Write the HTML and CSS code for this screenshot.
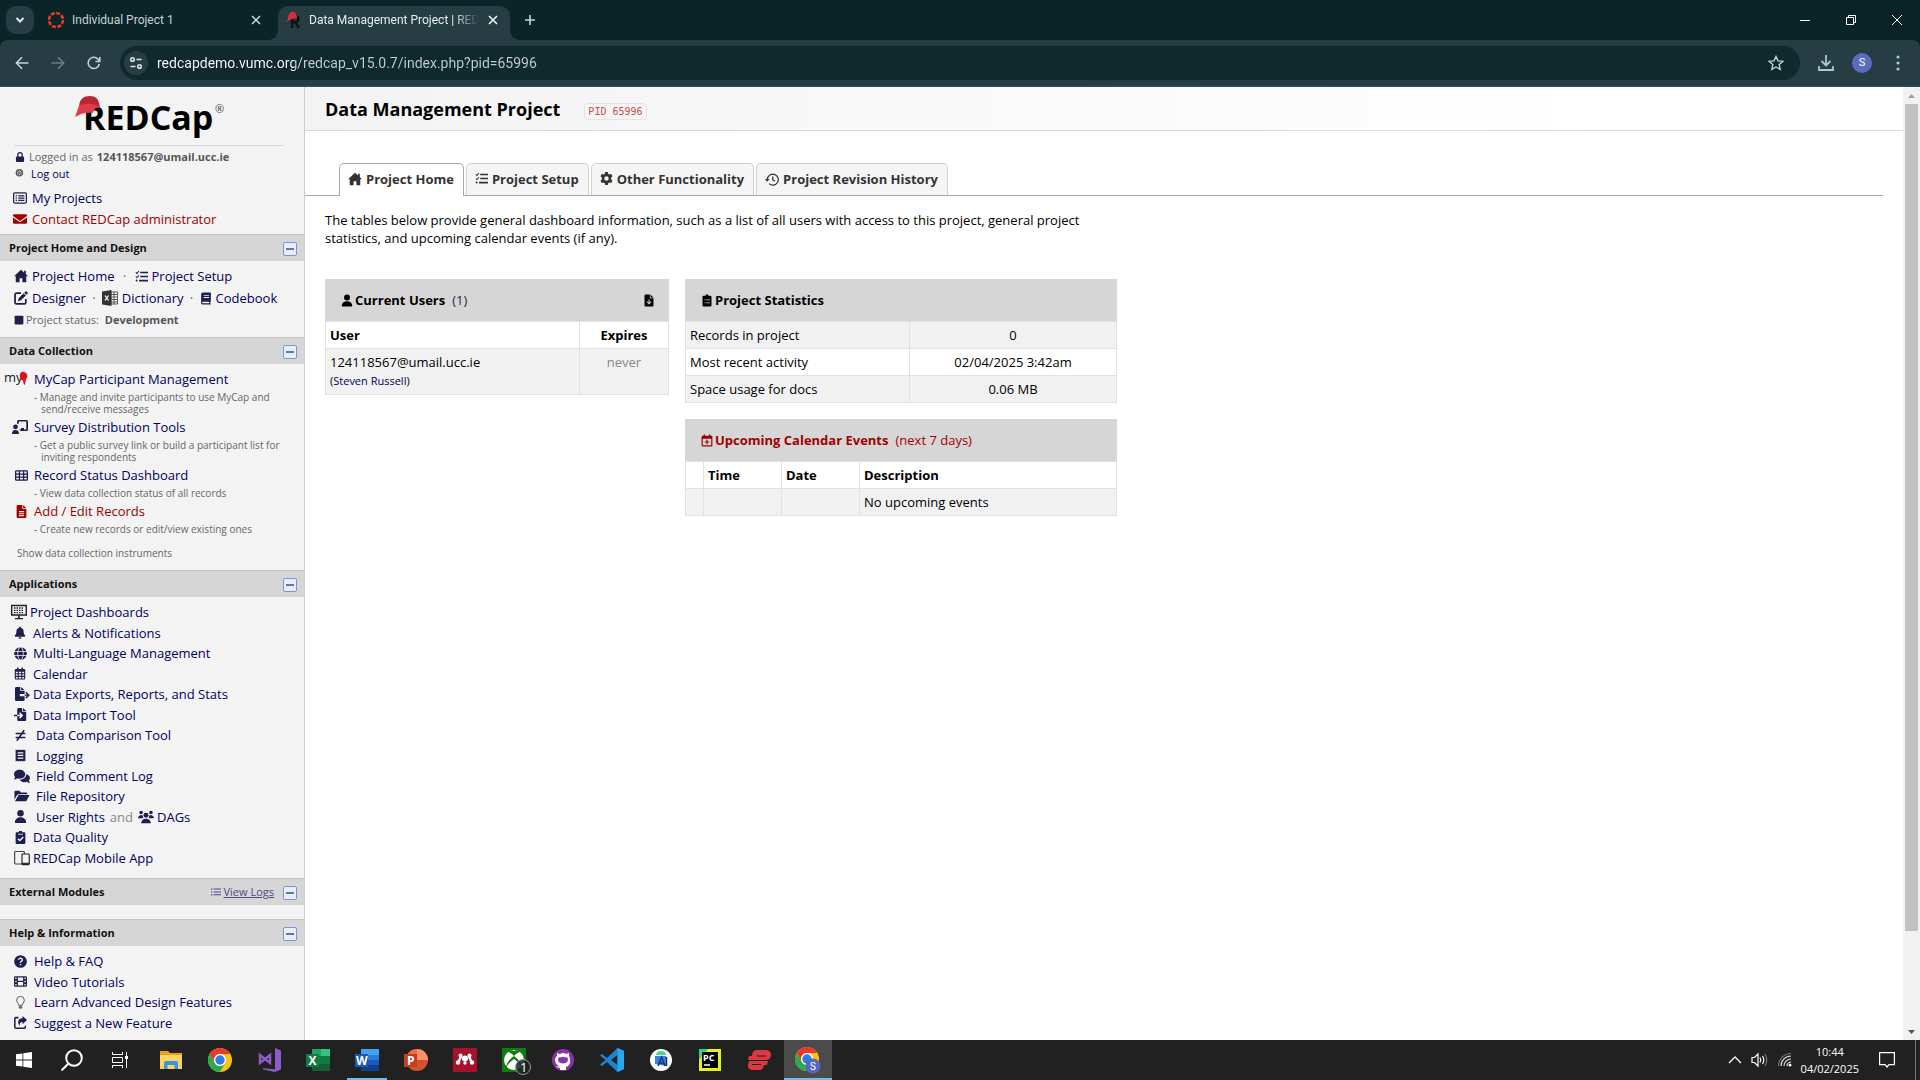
FILE: index.html
```html
<!DOCTYPE html>
<html lang="en">
<head>
<meta charset="utf-8">
<title>Data Management Project | REDCap</title>
<link rel="stylesheet" href="styles.css">
</head>
<body>
<svg class="sprite" aria-hidden="true">
  <symbol id="home" viewBox="0 0 16 16"><path d="M8 .8 0 8.2h2V15h4.4v-4.500h3.2V15H14V8.2h2L13.500 5.800V2h-2v2z"/></symbol>
  <symbol id="lock" viewBox="0 0 16 16"><path d="M8 0a4.500 4.500 0 0 0-4.500 4.500V7H3a1.500 1.500 0 0 0-1.500 1.500v6A1.500 1.500 0 0 0 3 16h10a1.500 1.500 0 0 0 1.500-1.500v-6A1.500 1.500 0 0 0 13 7h-.5V4.500A4.500 4.500 0 0 0 8 0zM5.500 7V4.500a2.500 2.500 0 0 1 5 0V7z"/></symbol>
  <symbol id="wheel" viewBox="0 0 16 16"><circle cx="7" cy="6" r="6" fill="#555"/><path d="M7 2v2.500M7 7.500V10M3 6h2.500M8.500 6H11M4 3l1.500 1.500M8.500 7.500 10 9M10 3 8.500 4.500M5.500 7.500 4 9" stroke="#ddd" stroke-width="1.500"/></symbol>
  <symbol id="listbox" viewBox="0 0 16 16"><rect x=".7" y="2.200" width="14.600" height="11.600" rx="1.500" fill="none" stroke="currentColor" stroke-width="1.400"/><path d="M3 4.800h1.500v1.400H3zm3 0h7v1.400H6zM3 7.400h1.500v1.400H3zm3 0h7v1.400H6zM3 10h1.500v1.400H3zm3 0h7v1.400H6z"/></symbol>
  <symbol id="mail" viewBox="0 0 16 16"><path d="M1.500 2.500h13A1.500 1.500 0 0 1 16 4v.7L8 10.200 0 4.700V4a1.500 1.500 0 0 1 1.500-1.500zM0 6.200l8 5.500 8-5.500V12a1.500 1.500 0 0 1-1.500 1.500h-13A1.500 1.500 0 0 1 0 12z"/></symbol>
  <symbol id="tasks" viewBox="0 0 16 16"><path d="M1 3l1.300 1.300L4.800 1.500M1 8l1.300 1.300L4.800 6.500" fill="none" stroke="currentColor" stroke-width="1.300"/><path d="M6.500 2H16v2H6.500zm0 5H16v2H6.500zM5 12h11v2H5z"/><circle cx="2" cy="13" r="1.200"/></symbol>
  <symbol id="edit" viewBox="0 0 16 16"><path d="M8 2.500H3A1.800 1.800 0 0 0 1.200 4.300V13A1.800 1.800 0 0 0 3 14.800h8.700a1.800 1.800 0 0 0 1.800-1.800V9" fill="none" stroke="currentColor" stroke-width="2"/><path d="M12.800.8a1.300 1.300 0 0 1 1.900 0l.6.600a1.300 1.300 0 0 1 0 1.900l-1.100 1.100-2.500-2.500zM11 2.600l2.500 2.500-5.600 5.600-3.400.9.900-3.400z"/></symbol>
  <symbol id="excelfile" viewBox="0 0 16 16"><path d="M9 2h6.500v12H9z" fill="#fff" stroke="#333" stroke-width=".8"/><path d="M9.500 4.500H15M9.500 7H15M9.500 9.500H15M9.500 12H15M12 2v12" stroke="#444" stroke-width=".9"/><path d="M0 1.500 9.500 0v16L0 14.500z" fill="#333"/><path d="m3 5.500 3.500 5M6.500 5.500 3 10.500" stroke="#fff" stroke-width="1.300"/></symbol>
  <symbol id="book" viewBox="0 0 16 16"><path fill-rule="evenodd" d="M4 0h10.500v11.800l-.8.800v1.600l.8.800v1H4a2.500 2.500 0 0 1-2.500-2.500v-11A2.500 2.500 0 0 1 4 0zm1 3.500v1.200h7V3.500zm0 2.500v1.200h7V6zm-1 6.300a1 1 0 0 0 0 2h8.200v-2z"/></symbol>
  <symbol id="square" viewBox="0 0 16 16"><rect x="1" y="1" width="14" height="14" rx="1.500"/></symbol>
  <symbol id="teacher" viewBox="0 0 16 16"><circle cx="3.500" cy="7.800" r="2.400"/><path d="M0 15a3.500 4 0 0 1 7 0zM5 2.500A1.500 1.500 0 0 1 6.500 1H14.500A1.500 1.500 0 0 1 16 2.500v8a1.500 1.500 0 0 1-1.500 1.500H8.200l-.8-1.500H9V9h3v1.500h2.300v-8H6.700v2.600L5 4.500z"/></symbol>
  <symbol id="table" viewBox="0 0 16 16"><path fill-rule="evenodd" d="M1.500 1.500h13A1.500 1.500 0 0 1 16 3v10a1.500 1.500 0 0 1-1.500 1.500h-13A1.500 1.500 0 0 1 0 13V3a1.500 1.500 0 0 1 1.500-1.500zM1.600 3v2.400h3V3zm4.600 0v2.400h3.600V3zm5.200 0v2.400h3V3zM1.600 7v2.200h3V7zm4.600 0v2.200h3.600V7zm5.200 0v2.200h3V7zM1.600 10.800V13h3v-2.200zm4.600 0V13h3.600v-2.200zm5.200 0V13h3v-2.200z"/></symbol>
  <symbol id="file" viewBox="0 0 16 16"><path fill-rule="evenodd" d="M3.500 0H9v5h5v9.500a1.500 1.500 0 0 1-1.500 1.500h-9A1.500 1.500 0 0 1 2 14.500v-13A1.500 1.500 0 0 1 3.500 0zM10 0l4 4h-4zM4.800 7.500V9h6.400V7.500zm0 2.500v1.300h6.400V10zm0 2.300v1.400h6.400v-1.400z"/></symbol>
  <symbol id="board" viewBox="0 0 16 16"><path d="M.7 1.500h14.600v9.500H.7z" fill="none" stroke="#222" stroke-width="1.400"/><path d="M3 4h10M3 6.300h10M3 8.600h10" stroke="#222" stroke-width="1.300" stroke-dasharray="1.500 1"/><path d="M7.200 11h1.600v3H12v1.300H4V14h3.200z" fill="#222"/></symbol>
  <symbol id="bell" viewBox="0 0 16 16"><path d="M8 0a1 1 0 0 0-1 1v.7A5 5 0 0 0 3.200 6.500c0 3-1 4-2 5.200-.6.800-.1 1.800.8 1.800h12c.9 0 1.400-1 .8-1.800-1-1.200-2-2.200-2-5.200A5 5 0 0 0 9 1.700V1a1 1 0 0 0-1-1zM6 14.300a2 2 0 0 0 4 0z"/></symbol>
  <symbol id="globe" viewBox="0 0 16 16"><circle cx="8" cy="8" r="7.800"/><g fill="none" stroke="#f3f3f3" stroke-width="1"><ellipse cx="8" cy="8" rx="3.400" ry="7.800"/><path d="M0 5.500h16M0 10.500h16"/></g></symbol>
  <symbol id="cal" viewBox="0 0 16 16"><path fill-rule="evenodd" d="M4 0h2v2h4V0h2v2h1.500A1.500 1.500 0 0 1 15 3.500v11a1.500 1.500 0 0 1-1.500 1.500h-11A1.500 1.500 0 0 1 1 14.500v-11A1.500 1.500 0 0 1 2.500 2H4zM2.500 5.500v2h2.500v-2zm3.900 0v2h3.200v-2zm4.600 0v2h2.500v-2zM2.500 9v2H5V9zm3.900 0v2h3.200V9zM11 9v2h2.500V9zm-8.500 3.500v2H5v-2zm3.900 0v2h3.200v-2zm4.600 0v2h2.500v-2z"/></symbol>
  <symbol id="export" viewBox="0 0 18 16"><path d="M2.500 0H7v4.500h5V8H6.500v2.500H12v4a1.500 1.500 0 0 1-1.500 1.500h-8A1.500 1.500 0 0 1 1 14.500v-13A1.500 1.500 0 0 1 2.500 0zM8 0l4 3.800H8zM12 8.500h2.800l-2-2L14 5.400l4 3.900-4 3.900-1.200-1.200 1.900-1.900H12z"/></symbol>
  <symbol id="import" viewBox="0 0 16 16"><path fill-rule="evenodd" d="M5.500 0H10v4.500h5v10a1.500 1.500 0 0 1-1.500 1.500h-8A1.500 1.500 0 0 1 4 14.500v-4.200h3.800L6.300 12l1.200 1.200 3.900-4-3.900-3.900L6.300 6.500l1.500 1.700H4V1.500A1.500 1.500 0 0 1 5.500 0zM11 0l4 3.800h-4zM0 8.200h4v2H0z"/></symbol>
  <symbol id="noteq" viewBox="0 0 16 16"><path d="M2 5.500h12M2 10.500h12M12.500 1.500l-9 13" fill="none" stroke="currentColor" stroke-width="1.900"/></symbol>
  <symbol id="receipt" viewBox="0 0 16 16"><path fill-rule="evenodd" d="M2 .5 3.500 1.500 5 .5l1.500 1L8 .5l1.500 1 1.500-1 1.500 1 1.500-1v15l-1.500-1-1.500 1-1.500-1-1.500 1-1.500-1-1.500 1-1.500-1-1.500 1zM4.500 4v1.400h7V4zm0 3.200v1.400h7V7.200zm0 3.300v1.400h7v-1.400z"/></symbol>
  <symbol id="comments" viewBox="0 0 18 16"><path d="M6.300 1C2.800 1 0 3.200 0 6c0 1.200.5 2.200 1.300 3.100C1 10.200.3 11 .2 11.200c-.2.200 0 .6.300.6 1.600 0 2.800-.8 3.400-1.200.7.200 1.500.4 2.400.4 3.500 0 6.300-2.200 6.300-5S9.800 1 6.300 1z"/><path d="M13.700 6c0 3.500-3.300 6.100-7.200 6.100.9 1.700 3 2.900 5.500 2.900.9 0 1.700-.1 2.400-.4.600.5 1.800 1.200 3.200 1.200.3 0 .4-.3.200-.6-.1-.1-.8-.9-1.100-2 .8-.9 1.300-2 1.300-3.100 0-1.900-1.700-3.500-4.300-4.100z"/></symbol>
  <symbol id="folder" viewBox="0 0 18 16"><path d="M2 2h4l2 2h5.500A1.500 1.500 0 0 1 15 5.500V6H5.200a2 2 0 0 0-1.700 1L.5 12V3.500A1.500 1.500 0 0 1 2 2zM5.200 7H17.500l-3.200 6.200a1.500 1.500 0 0 1-1.300.8H1z"/></symbol>
  <symbol id="user" viewBox="0 0 16 16"><circle cx="8" cy="4" r="4"/><path d="M1 15a7 6 0 0 1 14 0q0 1-1 1H2q-1 0-1-1z"/></symbol>
  <symbol id="users" viewBox="0 0 18 16"><circle cx="3.500" cy="3" r="2"/><circle cx="14.500" cy="3" r="2"/><circle cx="9" cy="6" r="2.800"/><path d="M0 9a3.500 3.500 0 0 1 5.500-2.500A4 4 0 0 0 6.300 9.500H.5zM18 9a3.500 3.500 0 0 0-5.500-2.500 4 4 0 0 1-.8 3h5.800zM3.500 15a5.500 5 0 0 1 11 0z"/></symbol>
  <symbol id="clipcheck" viewBox="0 0 16 16"><path d="M6 1.500a2 2 0 0 1 4 0h2.500A1.500 1.500 0 0 1 14 3v11.500a1.500 1.500 0 0 1-1.500 1.500h-9A1.500 1.500 0 0 1 2 14.500V3a1.500 1.500 0 0 1 1.500-1.500z"/><path d="m4.800 9.500 2.300 2.300 4.300-4.500" fill="none" stroke="#f3f3f3" stroke-width="1.700"/><path d="M5 4h6" stroke="#f3f3f3"/></symbol>
  <symbol id="devices" viewBox="0 0 18 16"><rect x=".7" y=".7" width="11" height="14" rx="1" fill="#f3f3f3" stroke="#444" stroke-width="1.300"/><rect x="9" y="3.500" width="8.200" height="12" rx="1" fill="#f3f3f3" stroke="#222" stroke-width="1.300"/><path d="M9 14h8" stroke="#222" stroke-width="1.300"/></symbol>
  <symbol id="help" viewBox="0 0 16 16"><circle cx="8" cy="8" r="7.800"/><path d="M5.800 6a2.200 2 0 1 1 3.500 1.600C8.400 8.200 8 8.500 8 9.500M8 11v1.700" fill="none" stroke="#f3f3f3" stroke-width="1.700"/></symbol>
  <symbol id="film" viewBox="0 0 16 16"><path fill-rule="evenodd" d="M1.500 1.500h13A1.500 1.500 0 0 1 16 3v10a1.500 1.500 0 0 1-1.500 1.500h-13A1.500 1.500 0 0 1 0 13V3a1.500 1.500 0 0 1 1.500-1.500zM1.500 3.200V5h1.700V3.200zm0 4v1.800h1.700V7.200zm0 4V13h1.700v-1.800zm11.300-8V5h1.700V3.200zm0 4v1.800h1.700V7.200zm0 4V13h1.700v-1.800zM4.800 3v4.200h6.400V3zm0 5.700V13h6.400V8.700z"/></symbol>
  <symbol id="bulb" viewBox="0 0 16 16"><path d="M6 11.500C5.800 9.200 3.300 8.300 3.300 5.200a4.700 4.700 0 0 1 9.400 0c0 3.100-2.500 4-2.700 6.300z" fill="none" stroke="#555" stroke-width="1.200"/><path d="M5.800 12.500h4.400v1.600L9 15.700H7l-1.200-1.600z" fill="#666"/></symbol>
  <symbol id="share" viewBox="0 0 16 16"><path d="M5.500 2H2.500A1.500 1.500 0 0 0 1 3.500v10A1.500 1.500 0 0 0 2.500 15h10a1.500 1.500 0 0 0 1.500-1.500V12" fill="none" stroke="currentColor" stroke-width="1.900"/><path d="M10.500 0 16 5l-5.500 5V7.300C7.500 7.300 6.500 9 7.500 12 3.500 9 4.500 3 10.500 2.900z"/></symbol>
  <symbol id="list" viewBox="0 0 16 16"><path d="M0 2.500h2.200v1.800H0zm4 0h12v1.600H4zM0 7h2.200v1.800H0zm4 0h12v1.600H4zm-4 4.600h2.200v1.800H0zm4 0h12v1.600H4z"/></symbol>
  <symbol id="gear" viewBox="0 0 16 16"><path fill-rule="evenodd" d="M6.400 0h3.200l.5 2.300 1.500.9 2.200-.8 1.600 2.800-1.700 1.600v2.400l1.700 1.600-1.600 2.800-2.200-.8-1.500.9-.5 2.300H6.400l-.5-2.300-1.500-.9-2.200.8L.6 10.800l1.700-1.600V6.800L.6 5.200l1.600-2.800 2.200.8 1.500-.9zM8 5.300a2.700 2.700 0 1 0 0 5.400 2.700 2.700 0 0 0 0-5.400z"/></symbol>
  <symbol id="history" viewBox="0 0 16 16"><path d="M2.600 8.500A6.300 6.300 0 1 1 4.600 13.300M8.900 5v4l2.400 1.500" fill="none" stroke="currentColor" stroke-width="1.400"/><path d="M0 8h5.200L2.600 11.200z"/></symbol>
  <symbol id="filedown" viewBox="0 0 16 16"><path fill-rule="evenodd" d="M3.500 0H9v5h5v9.500a1.500 1.500 0 0 1-1.500 1.500h-9A1.500 1.500 0 0 1 2 14.500v-13A1.500 1.500 0 0 1 3.500 0zM10 0l4 4h-4zM7.300 6.500v4L5.800 9l-1 1L8 13.300l3.200-3.300-1-1-1.500 1.500v-4z"/></symbol>
  <symbol id="cliplist" viewBox="0 0 16 16"><path fill-rule="evenodd" d="M6 1.500a2 2 0 0 1 4 0h2.500A1.500 1.500 0 0 1 14 3v11.500a1.500 1.500 0 0 1-1.500 1.500h-9A1.500 1.500 0 0 1 2 14.500V3a1.500 1.500 0 0 1 1.500-1.500zM4.500 6.500v1.300H6V6.500zm2.500 0v1.300h5V6.500zm-2.500 4v1.300H6v-1.300zm2.500 0v1.300h5v-1.300z"/></symbol>
  <symbol id="calplus" viewBox="0 0 16 16"><path fill-rule="evenodd" d="M3.500 0h2v1.800h5V0h2v1.800h1.300A1.500 1.500 0 0 1 15.200 3.300v11.200a1.500 1.500 0 0 1-1.500 1.500H2.300a1.500 1.500 0 0 1-1.500-1.500V3.300a1.500 1.500 0 0 1 1.500-1.500h1.200zM2.400 5.500v8.900h11.200V5.500zM7.200 7h1.600v2.200H11v1.600H8.800V13H7.200v-2.200H5V9.200h2.200z"/></symbol>
  <symbol id="chrome" viewBox="0 0 24 24"><circle cx="12" cy="12" r="12" fill="#fbc116"/><path d="M1.600 6A12 12 0 0 1 22.400 6H12a6 6 0 0 0-5.200 9z" fill="#e33b2e"/><path d="M1.600 6A12 12 0 0 0 12 24l5.200-9a6 6 0 0 1-10.400 0z" fill="#2da94f"/><circle cx="12" cy="12" r="6" fill="#fff"/><circle cx="12" cy="12" r="4.700" fill="#2f7de9"/></symbol>
</svg>

<header class="tabstrip">
  <button class="tab-search" aria-label="Search tabs"><svg width="10" height="10" viewBox="0 0 10 10" fill="none" stroke="#dfe9ea" stroke-width="2"><path d="m1.500 3 3.500 3.500L8.500 3"/></svg></button>
  <div class="btab">
    <svg width="18" height="18" viewBox="0 0 18 18"><circle cx="9" cy="9" r="7" fill="none" stroke="#e63b2a" stroke-width="2.600" stroke-dasharray="4 1.500"/></svg>
    <span class="btab-title">Individual Project 1</span>
    <button class="x" aria-label="Close tab"><svg width="10" height="10" viewBox="0 0 10 10" stroke="#cfdcdd" stroke-width="1.500"><path d="m1 1 8 8M9 1 1 9"/></svg></button>
  </div>
  <div class="btab current">
    <svg width="16" height="18" viewBox="0 0 16 18"><path d="M6 17V5h3.500a3 3 0 0 1 0 6H6m3 0 4 6" fill="none" stroke="#111" stroke-width="2.400"/><path d="M2 8C2 2 5 0 8 1c2 .6 3 3 3 6L6 8 0 11z" fill="#d0303f"/></svg>
    <span class="btab-title fade">Data Management Project | RED</span>
    <button class="x" aria-label="Close tab"><svg width="10" height="10" viewBox="0 0 10 10" stroke="#e8f0f0" stroke-width="1.700"><path d="m1 1 8 8M9 1 1 9"/></svg></button>
  </div>
  <button class="newtab" aria-label="New tab"><svg width="12" height="12" viewBox="0 0 12 12" stroke="#c8d6d8" stroke-width="1.600"><path d="M6 1v10M1 6h10"/></svg></button>
  <div class="winctl">
    <button aria-label="Minimise"><svg width="12" height="12" viewBox="0 0 12 12" stroke="#fff"><path d="M1 6.500h10"/></svg></button>
    <button aria-label="Restore"><svg width="12" height="12" viewBox="0 0 12 12" fill="none" stroke="#fff"><path d="M1.500 3.500h7v7h-7zM3.500 3V1.500h7v7H9"/></svg></button>
    <button aria-label="Close"><svg width="12" height="12" viewBox="0 0 12 12" stroke="#fff"><path d="m1 1 10 10M11 1 1 11"/></svg></button>
  </div>
</header>

<div class="toolbar-back"><div class="toolbar">
  <button aria-label="Back"><svg width="14" height="14" viewBox="0 0 14 14" fill="none" stroke="#c3d3d5" stroke-width="1.600"><path d="M13.500 7H1.500M7 1.300 1.400 7 7 12.700"/></svg></button>
  <button aria-label="Forward"><svg width="14" height="14" viewBox="0 0 14 14" fill="none" stroke="#6b7f83" stroke-width="1.600"><path d="M.5 7h12M7 1.300 12.600 7 7 12.700"/></svg></button>
  <button aria-label="Reload"><svg width="14" height="14" viewBox="0 0 14 14" fill="none" stroke="#c3d3d5" stroke-width="1.600"><path d="M12.300 8A5.600 5.600 0 1 1 11 3.200L12.800 5M12.800 1v4.500H8.500"/></svg></button>
  <div class="omnibox">
    <button class="site" aria-label="Site information"><svg width="14" height="14" viewBox="0 0 14 14" fill="none" stroke="#dfe9ea" stroke-width="1.500"><circle cx="3.500" cy="3.500" r="1.800"/><path d="M7.500 3.500h5M1.500 10.500h5"/><circle cx="10.500" cy="10.500" r="1.800"/></svg></button>
    <input class="url" type="text" aria-label="Address" value="redcapdemo.vumc.org/redcap_v15.0.7/index.php?pid=65996">
    <button class="star" aria-label="Bookmark"><svg width="16" height="16" viewBox="0 0 16 16" fill="none" stroke="#c6d2d3" stroke-width="1.400"><path d="m8 1.500 2 4.400 4.800.5-3.600 3.200 1 4.800L8 12l-4.200 2.400 1-4.800L1.200 6.400 6 5.900z"/></svg></button>
  </div>
  <button class="dl" aria-label="Downloads"><svg width="16" height="16" viewBox="0 0 16 16" fill="none" stroke="#a9c9ce" stroke-width="1.800"><path d="M8 0v10M3.500 6 8 10.500 12.500 6M1 11v4h14v-4"/></svg></button>
  <button class="avatar" aria-label="Profile">S</button>
  <button class="more" aria-label="Menu"><svg width="4" height="16" viewBox="0 0 4 16" fill="#a9c9ce"><circle cx="2" cy="2" r="1.600"/><circle cx="2" cy="8" r="1.600"/><circle cx="2" cy="14" r="1.600"/></svg></button>
</div></div>

<div class="page">
  <aside class="side">
    <a class="logo" href="#" aria-label="REDCap home"><svg width="154" height="50" viewBox="0 0 154 50"><text x="11" y="35" class="logo-text">REDCap</text><text x="143" y="18" class="logo-reg">®</text><path d="M7 12C7 4 12 1 18 1c7 0 9 4 10 12z" fill="#b92636"/><path d="M7 11 3 22c6-4 12-5 18-4 1-4 3-6 7-6-7-4-15-4-21-1z" fill="#df3c4c"/></svg></a>
    <div class="who">
      <p><svg class="i i10"><use href="#lock"/></svg>Logged in as <b>124118567@umail.ucc.ie</b></p>
      <p class="out"><svg class="i i10"><use href="#wheel"/></svg><a href="#">Log out</a></p>
    </div>
    <ul class="top-links">
      <li><svg class="i"><use href="#listbox"/></svg><a href="#">My Projects</a></li>
      <li class="red"><svg class="i"><use href="#mail"/></svg><a href="#">Contact REDCap administrator</a></li>
    </ul>

    <div class="bar"><h2>Project Home and Design</h2><button class="fold" aria-label="Collapse"></button></div>
    <div class="design">
      <p><svg class="i"><use href="#home"/></svg><a href="#">Project Home</a><span class="dot wide-dot">·</span><svg class="i i13"><use href="#tasks"/></svg><a href="#">Project Setup</a></p>
      <p><svg class="i"><use href="#edit"/></svg><a href="#">Designer</a><span class="dot">·</span><svg class="i i16"><use href="#excelfile"/></svg><a href="#">Dictionary</a><span class="dot">·</span><svg class="i i12"><use href="#book"/></svg><a href="#">Codebook</a></p>
      <p class="status"><svg class="i i10"><use href="#square"/></svg>Project status: <b>Development</b></p>
    </div>

    <div class="bar"><h2>Data Collection</h2><button class="fold" aria-label="Collapse"></button></div>
    <div class="collect">
      <div class="item"><p><span class="slot"><svg width="24" height="16" viewBox="0 0 24 16"><text x="0" y="11" class="my">my</text><path d="M16 6c-1-4 2-6 4-5 4 1 4 5 2 7l-1 6c-2-1-2-4-2-5-1 1-2 0-3-3z" fill="#e01020"/></svg></span><a href="#">MyCap Participant Management</a></p><div class="sub">- Manage and invite participants to use MyCap and send/receive messages</div></div>
      <div class="item"><p><span class="slot"><svg class="i i16"><use href="#teacher"/></svg></span><a href="#">Survey Distribution Tools</a></p><div class="sub">- Get a public survey link or build a participant list for inviting respondents</div></div>
      <div class="item"><p><span class="slot"><svg class="i i13"><use href="#table"/></svg></span><a href="#">Record Status Dashboard</a></p><div class="sub">- View data collection status of all records</div></div>
      <div class="item red"><p><span class="slot"><svg class="i i13"><use href="#file"/></svg></span><a href="#">Add / Edit Records</a></p><div class="sub">- Create new records or edit/view existing ones</div></div>
      <div class="show">Show data collection instruments</div>
    </div>

    <div class="bar"><h2>Applications</h2><button class="fold" aria-label="Collapse"></button></div>
    <ul class="apps">
      <li class="tight"><svg class="i i16"><use href="#board"/></svg><a href="#">Project Dashboards</a></li>
      <li><svg class="i i12"><use href="#bell"/></svg><a href="#">Alerts &amp; Notifications</a></li>
      <li><svg class="i i13"><use href="#globe"/></svg><a href="#">Multi-Language Management</a></li>
      <li><svg class="i i12"><use href="#cal"/></svg><a href="#">Calendar</a></li>
      <li><svg class="i i16 i13h"><use href="#export"/></svg><a href="#">Data Exports, Reports, and Stats</a></li>
      <li><svg class="i i13"><use href="#import"/></svg><a href="#">Data Import Tool</a></li>
      <li class="loose"><svg class="i i13"><use href="#noteq"/></svg><a href="#">Data Comparison Tool</a></li>
      <li class="loose"><svg class="i i13"><use href="#receipt"/></svg><a href="#">Logging</a></li>
      <li class="loose"><svg class="i i16"><use href="#comments"/></svg><a href="#">Field Comment Log</a></li>
      <li class="loose"><svg class="i i16"><use href="#folder"/></svg><a href="#">File Repository</a></li>
      <li class="loose"><svg class="i i13"><use href="#user"/></svg><a href="#">User Rights</a><span class="and">and</span><svg class="i i16 dags"><use href="#users"/></svg><a href="#">DAGs</a></li>
      <li><svg class="i i13"><use href="#clipcheck"/></svg><a href="#">Data Quality</a></li>
      <li><svg class="i i16"><use href="#devices"/></svg><a href="#">REDCap Mobile App</a></li>
    </ul>

    <div class="bar"><h2>External Modules</h2><a class="logs" href="#"><svg class="i i10"><use href="#list"/></svg><span>View Logs</span></a><button class="fold" aria-label="Collapse"></button></div>
    <div class="empty"></div>
    <div class="bar"><h2>Help &amp; Information</h2><button class="fold" aria-label="Collapse"></button></div>
    <ul class="apps help">
      <li><svg class="i i13"><use href="#help"/></svg><a href="#">Help &amp; FAQ</a></li>
      <li><svg class="i i13"><use href="#film"/></svg><a href="#">Video Tutorials</a></li>
      <li><svg class="i i13"><use href="#bulb"/></svg><a href="#">Learn Advanced Design Features</a></li>
      <li><svg class="i i13"><use href="#share"/></svg><a href="#">Suggest a New Feature</a></li>
    </ul>
  </aside>

  <main class="main">
    <div class="title"><h1>Data Management Project</h1><span class="pid">PID 65996</span></div>
    <nav class="ptabs">
      <a class="on" href="#"><svg class="i"><use href="#home"/></svg>Project Home</a>
      <a href="#"><svg class="i i13"><use href="#tasks"/></svg>Project Setup</a>
      <a href="#"><svg class="i i13"><use href="#gear"/></svg>Other Functionality</a>
      <a href="#"><svg class="i"><use href="#history"/></svg>Project Revision History</a>
    </nav>
    <div class="content">
      <p class="intro">The tables below provide general dashboard information, such as a list of all users with access to this project, general project statistics, and upcoming calendar events (if any).</p>
      <div class="cols">
        <section class="users">
          <div class="cap"><svg class="i i12"><use href="#user"/></svg><h3>Current Users</h3><span class="count">(1)</span><button class="dlusers" aria-label="Download list"><svg class="i i12"><use href="#filedown"/></svg></button></div>
          <table>
            <colgroup><col><col class="c-exp"></colgroup>
            <tr><th>User</th><th class="mid">Expires</th></tr>
            <tr class="alt"><td>124118567@umail.ucc.ie<br><small>(<a href="#">Steven Russell</a>)</small></td><td class="mid grey">never</td></tr>
          </table>
        </section>
        <div class="right">
          <section>
            <div class="cap"><svg class="i i12"><use href="#cliplist"/></svg><h3>Project Statistics</h3></div>
            <table>
              <colgroup><col><col class="c-stat"></colgroup>
              <tr class="alt"><td>Records in project</td><td class="mid">0</td></tr>
              <tr><td>Most recent activity</td><td class="mid">02/04/2025 3:42am</td></tr>
              <tr class="alt"><td>Space usage for docs</td><td class="mid">0.06 MB</td></tr>
            </table>
          </section>
          <section>
            <div class="cap redcap"><svg class="i i12"><use href="#calplus"/></svg><h3>Upcoming Calendar Events</h3><span class="days">(next 7 days)</span></div>
            <table>
              <colgroup><col class="c-a"><col class="c-b"><col class="c-b"><col></colgroup>
              <tr><th></th><th>Time</th><th>Date</th><th>Description</th></tr>
              <tr class="alt"><td></td><td></td><td></td><td>No upcoming events</td></tr>
            </table>
          </section>
        </div>
      </div>
    </div>
  </main>

  <div class="scroll">
    <svg width="17" height="17" viewBox="0 0 17 17"><path d="m5 11 3.500-4L12 11z" fill="#a0a0a0"/></svg>
    <div class="track"><div class="thumb"></div></div>
    <svg width="17" height="17" viewBox="0 0 17 17"><path d="m5 7 3.500 4L12 7z" fill="#505050"/></svg>
  </div>
</div>

<footer class="taskbar">
  <div class="sys">
    <button aria-label="Start"><svg width="16" height="16" viewBox="0 0 16 16" fill="#fff"><path d="M0 2.300 6.500 1.400v6.200H0zM7.300 1.300 16 0v7.600H7.300zM0 8.400h6.500v6.200L0 13.700zM7.300 8.400H16V16l-8.700-1.300z"/></svg></button>
    <button aria-label="Search"><svg width="22" height="22" viewBox="0 0 22 22" fill="none" stroke="#fff" stroke-width="2"><circle cx="13" cy="9" r="7.800"/><path d="m7.500 14.500-7 7"/></svg></button>
    <button aria-label="Task view"><svg width="16" height="16" viewBox="0 0 16 16" fill="none" stroke="#fff"><path d="M.5 0v2.500h10V0M.5 5.500h10v5H.5zM.5 16v-2.500h10V16M14.500 0v16"/><path d="M13 4h3v3h-3z" fill="#fff" stroke="none"/></svg></button>
  </div>
  <div class="run">
    <button aria-label="File Explorer"><svg width="22" height="18" viewBox="0 0 22 18"><path d="M0 0h8l2 2h12v16H0z" fill="#e8a50e"/><path d="M0 4h22v14H0z" fill="#fbd367"/><path d="M4 18v-6q0-2 2-2h10q2 0 2 2v6h-3.500v-4h-7v4z" fill="#3b95dc"/></svg></button>
    <button aria-label="Chrome"><svg width="24" height="24"><use href="#chrome"/></svg></button>
    <button aria-label="Visual Studio"><svg width="24" height="24" viewBox="0 0 24 24" fill="none"><path d="M18 0l6 2.500v19L18 24 6 21.500v-1.300l12 1z" fill="#8b5cc8"/><path d="M3 7v8l5-4 5 4V7L8 11z" stroke="#8b5cc8" stroke-width="2.500"/></svg></button>
    <button aria-label="Excel"><svg width="24" height="24" viewBox="0 0 24 24"><path d="M6 1h18v22H6z" fill="#107c41"/><path d="M6 1h9v7H6z" fill="#21a366"/><path d="M15 1h9v7h-9z" fill="#33c481"/><path d="M6 16h18v7H6z" fill="#185c37"/><path d="M0 6h13v13H0z" fill="#107c41"/><text x="2.500" y="16.500" class="office">X</text></svg></button>
    <button class="open" aria-label="Word"><svg width="24" height="24" viewBox="0 0 24 24"><path d="M6 1h18v6H6z" fill="#41a5ee"/><path d="M6 7h18v5H6z" fill="#2b7cd3"/><path d="M6 12h18v5H6z" fill="#185abd"/><path d="M6 17h18v6H6z" fill="#103f91"/><path d="M0 6h13v13H0z" fill="#185abd"/><text x="1" y="16.500" class="office">W</text></svg></button>
    <button aria-label="PowerPoint"><svg width="24" height="24" viewBox="0 0 24 24"><circle cx="13" cy="12" r="11" fill="#d35230"/><path d="M13 1a11 11 0 0 1 11 11H13z" fill="#ff8f6b"/><path d="M2 12A11 11 0 0 1 13 1v11z" fill="#ed6c47"/><path d="M0 6h13v13H0z" fill="#c43e1c"/><text x="3" y="16.500" class="office">P</text></svg></button>
    <button aria-label="Mendeley"><svg width="24" height="24" viewBox="0 0 24 24"><path d="M0 0h24v24H0z" fill="#a5122a"/><g fill="#fff"><circle cx="12" cy="10.500" r="3"/><circle cx="7.500" cy="7.500" r="2"/><circle cx="16.500" cy="7.500" r="2"/><circle cx="5" cy="14.500" r="2.200"/><circle cx="12" cy="15" r="1.700"/><circle cx="19" cy="14.500" r="2.200"/><path d="M6.500 8.500h3l-2.500 5H4.500zM17.500 8.500h-3l2.500 5h2.500z"/></g></svg></button>
    <button aria-label="Xbox"><svg width="34" height="30" viewBox="-5 -3 34 30"><path d="M0 0h24v24H0z" fill="#107c10"/><circle cx="12" cy="12" r="10" fill="#fff"/><path d="M5 4c3 0 5 2 7 4 2-2 4-4 7-4-3-2-5-2-7-1-2-1-4-1-7 1zM4 20c0-5 4-9 8-12 4 3 8 7 8 12-2-4-5-7-8-9-3 2-6 5-8 9z" fill="#107c10"/><circle cx="21" cy="19" r="7.500" fill="#222d" stroke="#999"/><text x="18" y="24" class="badge">1</text></svg></button>
    <button aria-label="GitHub"><svg width="22" height="24" viewBox="0 0 22 24"><circle cx="11" cy="12" r="11" fill="#8534a8"/><path d="M11 5a7.500 7.500 0 0 1 3 14.200V22H8v-2.300c-2 .4-3-.5-4-2 1.500 0 2 1.200 4 .8C2 16 2 10 5 8L5 5l3 1.200Q9.500 5 11 5zM14 6.200 17 5v3q2 3 0 6z" fill="#fff"/><path d="M6.500 9.500q4.500-1 9 0 2 5.500-4.500 6-6.500-.5-4.500-6z" fill="#8534a8"/></svg></button>
    <button aria-label="VS Code"><svg width="24" height="24" viewBox="0 0 24 24"><path d="M17.500 0 24 3v18l-6.500 3L7 14l-5 4-2-1.500 5.500-4.500L0 7.500 2 6l5 4zm0 7L11 12l6.500 5z" fill="#1c86d1"/><path d="M17.500 0 24 3v18l-6.500 3z" fill="#29a8f2"/></svg></button>
    <button aria-label="Android Studio"><svg width="22" height="24" viewBox="0 0 22 24"><circle cx="11" cy="12" r="11" fill="#fff"/><path d="M6 7a5 4 0 0 1 10 0z" fill="#3ddc84"/><path d="M5 8h11v10l-11-2z" fill="#3f7fe8"/><path d="m8 18 3.500-9 3.500 9M9.500 15h4M16.500 9v9" stroke="#123a6b" stroke-width="1.500" fill="none"/></svg></button>
    <button aria-label="PyCharm"><svg width="22" height="24" viewBox="0 0 22 24"><path d="M0 1h22v22H0z" fill="#e8f01e"/><path d="M0 1h9L0 12z" fill="#27d988"/><path d="M3 4h16v16H3z"/><path d="M5 17h6" stroke="#fff" stroke-width="1.500"/><text x="4" y="13" class="pc">PC</text></svg></button>
    <button aria-label="ExpressVPN"><svg width="24" height="22" viewBox="0 0 24 22" fill="#da3940"><path d="M9 1h11q4 1 4 5-.5 5-5 5H1l1-4h3q0-5 4-6zM2 12h19l-1 4h-3q-1 5-4 5H5q-4-1-4-4v-1z"/><path d="M10 7h9M5 15.500h9" stroke="#212121"/></svg></button>
    <button class="open focus" aria-label="Chrome, profile S"><svg width="28" height="28" viewBox="-1 -1 28 28"><svg x="0" y="0" width="24" height="24"><use href="#chrome"/></svg><circle cx="18" cy="19" r="7.500" fill="#5668bd"/><text x="15" y="23" class="s">S</text></svg></button>
  </div>
  <div class="tray">
    <svg width="14" height="8" viewBox="0 0 14 8" fill="none" stroke="#fff" stroke-width="1.300"><path d="m1 7 6-6 6 6"/></svg>
    <svg width="18" height="16" viewBox="0 0 18 16" fill="none" stroke="#fff" stroke-width="1.200"><path d="M1 5.500h2.500L7 2v12l-3.500-3.500H1zM9 5.500q1.500 2.500 0 5M11.500 4q2.500 4 0 8"/><path d="M14 2q3.500 6 0 12" stroke="#777"/></svg>
    <svg width="14" height="14" viewBox="0 0 14 14" fill="none" stroke="#ddd" stroke-width="1.200"><path d="M9 13a4 4 0 0 1 4-4M6 13a7 7 0 0 1 7-7M3 13A10 10 0 0 1 13 3"/><path d="M.5 13A12.500 12.500 0 0 1 13 .5" stroke="#777"/><circle cx="12" cy="12" r="1.500" fill="#fff" stroke="none"/></svg>
    <div class="clock">10:44<br>04/02/2025</div>
    <button class="note" aria-label="Notifications"><svg width="16" height="16" viewBox="0 0 16 16" fill="none" stroke="#fff" stroke-width="1.200"><path d="M.6.600h14.800v12H10L8 15l-2-2.400H.6z"/></svg></button>
    <button class="peek" aria-label="Show desktop"></button>
  </div>
</footer>
</body>
</html>
```
FILE: styles.css
```css
* { box-sizing: border-box; }
body {
  margin: 0;
  height: 100vh;
  display: grid;
  grid-template-rows: 40px 47px minmax(0, 1fr) 40px;
  font: 13px/18px "Open Sans", "Noto Sans", sans-serif;
  color: #000;
  background: #fff;
  overflow: hidden;
}
h1, h2, h3, p, ul { margin: 0; padding: 0; }
ul { list-style: none; }
a { color: #000066; text-decoration: none; }
button { border: 0; padding: 0; margin: 0; background: none; font: inherit; display: flex; align-items: center; justify-content: center; }
svg { display: block; flex: none; }
.sprite { position: absolute; width: 0; height: 0; }

/* icons */
.i { width: 14px; height: 14px; fill: currentColor; color: #1f1f4d; }
.i10 { width: 10px; height: 10px; }
.i12 { width: 12px; height: 13px; }
.i13 { width: 13px; height: 13px; }
.i16 { width: 16px; height: 16px; }
.i13h { height: 14px; }

/* browser tabs */
.tabstrip { display: flex; align-items: flex-end; background: #0a2428; padding-left: 6px; color: #c5d3d5; font: 12px/16px Roboto, sans-serif; }
.tab-search { width: 28px; height: 28px; border-radius: 10px; background: #263d43; align-self: center; }
.btab { position: relative; display: flex; align-items: center; gap: 7px; width: 244px; height: 34px; padding: 0 15px 6px 13px; }
.btab .x { width: 14px; height: 14px; margin-left: auto; }
.btab-title { white-space: nowrap; }
.current { width: 232px; background: #263d43; border-radius: 10px 10px 0 0; color: #e4eeee; padding: 0 10px 6px 8px; }
.current::before, .current::after { content: ""; position: absolute; bottom: 0; width: 10px; height: 10px; }
.current::before { left: -10px; background: radial-gradient(circle at 0 0, #0a2428 10px, #263d43 10px); }
.current::after { right: -10px; background: radial-gradient(circle at 100% 0, #0a2428 10px, #263d43 10px); }
.fade { flex: 1; -webkit-mask-image: linear-gradient(90deg, #000 85%, transparent); mask-image: linear-gradient(90deg, #000 85%, transparent); }
.newtab { width: 40px; height: 40px; }
.winctl { display: flex; margin-left: auto; }
.winctl button { width: 46px; height: 40px; }

/* toolbar */
.toolbar-back { background: #0a2428; }
.toolbar { height: 100%; display: flex; align-items: center; padding: 0 12px 1px 4px; background: #263d43; border-bottom: 1px solid #3b4e53; border-radius: 8px 8px 0 0; }
.toolbar > button { width: 36px; height: 34px; }
.omnibox { flex: 1; height: 34px; margin: 0 8px; display: flex; align-items: center; background: #10292d; border-radius: 17px; padding: 0 16px 0 4px; }
.site { width: 24px; height: 24px; border-radius: 12px; background: #263d43; }
.url { flex: 1; margin-left: 9px; border: 0; padding: 0; outline: 0; font: 14px/20px Roboto, sans-serif; color: transparent; background: linear-gradient(90deg, #fff 137px, #c3cfd1 137px); -webkit-background-clip: text; background-clip: text; }
.toolbar > .avatar { width: 20px; height: 20px; margin: 0 8px; border-radius: 10px; background: #5c6bc0; color: #fff; font: 11px/20px Roboto, sans-serif; }
.toolbar > .more { width: 20px; margin-left: 8px; }

/* page */
.page { display: grid; grid-template-columns: 305px minmax(0, 1fr) 17px; overflow: hidden; }
.side { background: #f3f3f3; border-right: 1px solid #ccc; overflow: hidden; }
.logo { display: flex; justify-content: center; height: 59px; padding-top: 8px; margin: 0 20px 0 14px; border-bottom: 1px solid #d8d8d8; }
.logo-text { font: 700 34px "Open Sans", sans-serif; fill: #000; }
.logo-reg { font: 11px "Open Sans", sans-serif; fill: #444; }
.who { padding: 2px 0 0 15px; font-size: 11px; color: #666; }
.who p { display: flex; align-items: center; gap: 4px; height: 17px; }
.who b { color: #555; }
.who .out { gap: 6px; }
.top-links { padding: 5px 0; padding-left: 13px; }
.top-links li { display: flex; align-items: center; gap: 5px; height: 21px; }
.red .i, .red a { color: #a00000; }

.bar { display: flex; align-items: center; height: 27px; padding: 0 7px 0 9px; background: #d6d6d6; border-top: 1px solid #c4c4c4; }
.bar h2 { flex: 1; font-size: 11px; line-height: 26px; font-weight: 700; color: #111; }
.fold { width: 14px; height: 14px; margin-top: 2px; border: 1px solid #7d93d4; border-radius: 2px; background: linear-gradient(#5b74c4, #5b74c4) center / 8px 2px no-repeat, #e9eefb; }
.logs { display: flex; align-items: center; gap: 3px; margin-right: 9px; font-size: 11px; color: #4a4a8c; }
.logs .i { color: #4a4a8c; }
.logs span { text-decoration: underline; }

.design { padding: 4px 0 6px 14px; }
.design p { display: flex; align-items: center; gap: 4px; height: 22px; }
.dot { width: 8px; text-align: center; color: #666; }
.wide-dot { width: 12px; }
.design .status { gap: 2px; font-size: 11px; color: #666; }
.status b { margin-left: 4px; color: #555; }

.collect { padding: 5px 0 9px; }
.item { padding-bottom: 2px; }
.item p { display: flex; align-items: center; gap: 6px; height: 20px; padding-left: 4px; }
.slot { display: flex; justify-content: flex-end; width: 24px; }
.my { font: 13px "Open Sans", sans-serif; fill: #222; }
.sub { margin-top: 2px; padding: 0 20px 0 41px; text-indent: -7px; font-size: 10px; line-height: 12px; color: #666; }
.show { margin-top: 8px; padding-left: 17px; font-size: 10px; line-height: 16px; color: #666; }

.apps { display: flex; flex-direction: column; height: 281px; padding: 5px 0 10px 14px; }
.apps li { flex: 1; display: grid; grid-template-columns: 19px auto auto auto 1fr; align-items: center; }
.apps .tight { margin-left: -3px; }
.apps .loose { grid-template-columns: 22px auto auto auto 1fr; }
.and { margin: 0 5px; color: #888; }
.apps .dags { margin-right: 3px; }
.empty { height: 14px; }
.help { height: 94px; padding-bottom: 7px; }
.help li { grid-template-columns: 20px 1fr; }

/* main */
.title { display: flex; align-items: center; gap: 24px; height: 44px; padding-left: 20px; border-bottom: 1px solid #d8d8d8; background: linear-gradient(90deg, #f3f3f3, #fff 80%); }
.title h1 { font-size: 18px; line-height: 24px; font-weight: 700; }
.pid { margin-top: 5px; padding: 0 3px; border: 1px solid #e4e4e4; border-radius: 4px; background: #f5f5f5; color: #cf4a50; font: 10px/15px "DejaVu Sans Mono", monospace; }
.ptabs { display: flex; gap: 2px; margin: 32px 20px 0 0; padding-left: 34px; border-bottom: 1px solid #aaa; }
.ptabs a { display: flex; align-items: center; gap: 4px; height: 32px; padding: 0 9px 2px 8px; border: 1px solid #d0d0d0; border-bottom: 0; border-radius: 5px 5px 0 0; background: #f5f5f5; color: #333; font-weight: 700; }
.ptabs .i { color: #333; }
.ptabs .on { margin-bottom: -1px; height: 33px; padding-bottom: 3px; background: #fff; border-color: #aaa; }
.content { padding: 15px 20px; }
.intro { max-width: 780px; }
.cols { display: flex; gap: 16px; align-items: flex-start; margin-top: 32px; }
.users { width: 344px; }
.right { width: 432px; display: flex; flex-direction: column; gap: 16px; }
.cap { display: flex; align-items: center; height: 42px; padding: 0 14px 0 16px; gap: 2px; background: #d6d6d6; }
.cap h3 { font-size: 13px; font-weight: 700; }
.cap .i { color: #000; }
.count { margin-left: 5px; color: #1f1f4d; }
.dlusers { margin-left: auto; }
.redcap h3, .redcap .i, .redcap .days { color: #a00000; }
.days { margin-left: 5px; }
table { width: 100%; border-collapse: collapse; table-layout: fixed; }
td, th { height: 27px; padding: 4px; border: 1px solid #dee2e6; text-align: left; vertical-align: top; font-weight: 400; }
th { font-weight: 700; }
.alt { background: #f1f1f1; }
.mid { text-align: center; }
.grey { color: #888; }
small { font-size: 11px; }
.c-exp { width: 89px; }
.c-stat { width: 207px; }
.c-a { width: 18px; }
.c-b { width: 78px; }

.scroll { display: flex; flex-direction: column; background: #f1f1f1; }
.track { flex: 1; padding: 0 2px; }
.thumb { height: 90%; background: #c1c1c1; }

/* taskbar */
.taskbar { display: flex; background: #212121; color: #fff; }
.sys, .run, .tray { display: flex; align-items: center; }
.sys button { width: 48px; height: 40px; }
.run { margin-left: 3px; gap: 1px; }
.run button { width: 48px; height: 40px; }
.open { background: linear-gradient(#76b9ed, #76b9ed) bottom / 40px 2px no-repeat; }
.focus { background: linear-gradient(#76b9ed, #76b9ed) bottom / 48px 2px no-repeat #4b4b4b; }
.office { font: 700 12px "Open Sans", sans-serif; fill: #fff; }
.badge { font: 13px "Open Sans", sans-serif; fill: #fff; }
.pc { font: 700 9px "Open Sans", sans-serif; fill: #fff; }
.s { font: 10px Roboto, sans-serif; fill: #fff; }
.tray { margin-left: auto; gap: 9px; }
.clock { font: 11px/17px "Open Sans", sans-serif; text-align: center; }
.note { width: 38px; height: 40px; }
.peek { width: 5px; height: 40px; border-left: 1px solid #777; }
```
